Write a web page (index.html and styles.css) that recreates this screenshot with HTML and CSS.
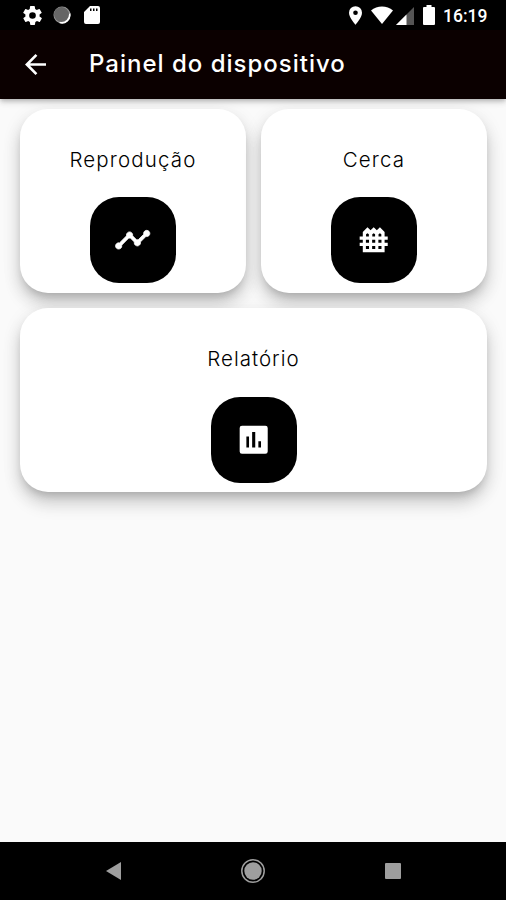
FILE: index.html
```html
<!DOCTYPE html>
<html lang="pt-BR">
<head>
<meta charset="utf-8">
<title>Painel do dispositivo</title>
<link rel="stylesheet" href="styles.css">
</head>
<body>
<div class="screen">
  <header class="top">
    <div class="status">
      <svg class="gear" viewBox="2 2 20 20"><path fill-rule="evenodd" d="M19.4 13a7.500 7.500 0 0 0 0-2l2.100-1.600a.5.5 0 0 0 .1-.6l-2-3.500a.5.5 0 0 0-.6-.2l-2.500 1a7.300 7.300 0 0 0-1.700-1l-.4-2.700a.5.500 0 0 0-.5-.4h-4a.5.5 0 0 0-.5.4L9.100 5.100a7.300 7.300 0 0 0-1.700 1l-2.500-1a.5.5 0 0 0-.6.2l-2 3.500a.5.5 0 0 0 .1.600L4.600 11a7.500 7.500 0 0 0 0 2l-2.100 1.600a.5.5 0 0 0-.1.600l2 3.500c.1.200.4.300.6.200l2.500-1a7.300 7.300 0 0 0 1.700 1l.4 2.700c0 .2.200.4.500.4h4c.2 0 .5-.2.500-.4l.4-2.700a7.300 7.300 0 0 0 1.700-1l2.500 1c.2.100.5 0 .6-.2l2-3.500a.5.5 0 0 0-.1-.6zM12 15.500a3.500 3.500 0 1 1 0-7 3.500 3.500 0 0 1 0 7z"/></svg>
      <svg class="disc" viewBox="0 0 18 18"><circle cx="9" cy="9" r="8.500" fill="#999"/><path d="M17.300 7A8.500 8.500 0 0 1 6 17z" fill="#fff"/><circle cx="8.500" cy="8.500" r="7.500" fill="#666"/></svg>
      <svg class="card-icon" viewBox="0 0 16 20"><path fill-rule="evenodd" d="M6 1h8a2 2 0 0 1 2 2v14a2 2 0 0 1-2 2H2a2 2 0 0 1-2-2V7zm0 2.500v2.500h1.500v-2.500zm3 0v2.500h1.500v-2.500zm3 0v2.500h1.500v-2.500z"/></svg>
      <span class="spacer"></span>
      <svg class="pin" viewBox="5 2 14 20"><path fill-rule="evenodd" d="M12 2a7 7 0 0 0-7 7c0 5.250 7 13 7 13s7-7.750 7-13a7 7 0 0 0-7-7zm0 9.500a2.500 2.500 0 1 1 0-5 2.500 2.500 0 0 1 0 5z"/></svg>
      <svg class="wifi" viewBox="0 0 22 18"><path d="M0 4.500C6-1 16-1 22 4.500L11 18z"/></svg>
      <svg class="signal" viewBox="0 0 18 18"><path d="M18 0v18H0z" fill="#555"/><path d="M10.500 7.500V18H0z"/></svg>
      <svg class="battery" viewBox="0 0 12 20"><path d="M3.500 0h5v2H11a1 1 0 0 1 1 1v16a1 1 0 0 1-1 1H1a1 1 0 0 1-1-1V3a1 1 0 0 1 1-1h2.500z"/></svg>
      <time class="clock">16:19</time>
    </div>
    <div class="appbar">
      <svg class="back" viewBox="4 4 16 16"><path d="M20 11H7.830l5.590-5.590L12 4l-8 8 8 8 1.410-1.410L7.830 13H20z"/></svg>
      <h1 class="title">Painel do dispositivo</h1>
    </div>
  </header>
  <main class="grid">
    <section class="card">
      <h2 class="label">Reprodução</h2>
      <div class="tile"><svg class="timeline" viewBox="0 0 24 24"><path d="M23 8c0 1.100-.9 2-2 2-.18 0-.35-.02-.51-.07l-3.560 3.550c.05.16.07.34.07.52 0 1.100-.9 2-2 2s-2-.9-2-2c0-.18.020-.36.070-.52l-2.550-2.550c-.16.050-.34.070-.52.070s-.36-.02-.52-.07l-4.550 4.560c.05.16.07.33.07.51 0 1.100-.9 2-2 2s-2-.9-2-2 .9-2 2-2c.18 0 .35.020.51.070l4.560-4.550C8.020 9.360 8 9.180 8 9c0-1.100.9-2 2-2s2 .9 2 2c0 .18-.02.36-.07.52l2.550 2.550c.16-.05.34-.07.52-.07s.36.020.52.070l3.550-3.560C19.020 8.350 19 8.180 19 8c0-1.100.9-2 2-2s2 .9 2 2z"/></svg></div>
    </section>
    <section class="card">
      <h2 class="label">Cerca</h2>
      <div class="tile"><svg viewBox="0 0 24 24"><path fill-rule="evenodd" d="M21 12v-2h-2V7l-3-3-2 2-2-2-2 2-2-2-3 3v3H3v2h2v2H3v2h2v4h14v-4h2v-2h-2v-2zM16 7.800l.9.700V10h-1.800V8.500zm-4 0l.9.700V10h-1.800V8.500zM11 14v-2h2v2zm2 2v2h-2v-2zM7.100 8.500l.9-.7.9.7V10H7.100zM7 12h2v2H7zm0 4h2v2H7zm10 2h-2v-2h2zm0-4h-2v-2h2z"/></svg></div>
    </section>
    <section class="card wide">
      <h2 class="label">Relatório</h2>
      <div class="tile"><svg viewBox="0 0 24 24"><path fill-rule="evenodd" d="M19.500 3h-15A1.500 1.500 0 0 0 3 4.500v15A1.500 1.500 0 0 0 4.500 21h15a1.500 1.500 0 0 0 1.500-1.500v-15A1.500 1.500 0 0 0 19.500 3zM9 17H7.300v-7H9zm4 0h-2V7h2zm3.700 0H15v-4h1.700z"/></svg></div>
    </section>
  </main>
  <nav class="nav">
    <svg class="nav-back" viewBox="0 0 15 18"><path d="M15 0v18L0 9z"/></svg>
    <svg class="nav-home" viewBox="0 0 24 24"><circle cx="12" cy="12" r="11.200" fill="none" stroke="#9e9e9e" stroke-width="1.500"/><circle cx="12" cy="12" r="8.700"/></svg>
    <svg class="nav-recent" viewBox="0 0 16 16"><rect width="16" height="16" rx="1"/></svg>
  </nav>
</div>
</body>
</html>
```

FILE: styles.css
```css
* { box-sizing: border-box; }
body { margin: 0; background: #fafafa; color: #000; font-family: Inter, sans-serif; }
svg { display: block; flex: none; fill: #fff; }
.screen { display: flex; flex-direction: column; height: 900px; overflow: hidden; }
.top {
  height: 99px;
  background: #0b0000;
  color: #fff;
  box-shadow: 0 2px 4px -1px rgba(0,0,0,.2), 0 4px 5px rgba(0,0,0,.1), 0 1px 10px rgba(0,0,0,.08);
}
.status { display: flex; align-items: center; height: 30px; padding: 0 18px 0 23px; background: #000; }
.gear { width: 19px; height: 19px; }
.disc { width: 18px; height: 18px; margin-left: 11px; }
.card-icon { width: 16px; height: 20px; margin-left: 13px; }
.spacer { flex: 1; }
.pin { width: 13px; height: 19px; }
.wifi { width: 22px; height: 18px; margin-left: 9px; }
.signal { width: 18px; height: 18px; margin: 2px 0 0 3px; }
.battery { width: 12px; height: 20px; margin-left: 9px; }
.clock { width: 45px; margin: 2px 0 0 8px; font: 500 17.500px/20px Roboto, sans-serif; white-space: nowrap; }
.appbar { display: flex; align-items: center; height: 68px; padding-left: 25px; }
.back { width: 21px; height: 21px; }
.title { margin: -1px 0 0 43px; font-size: 24px; font-weight: 500; line-height: 30px; letter-spacing: 1px; white-space: nowrap; }
.grid { flex: 1; display: grid; grid-template-columns: 226px 226px; grid-auto-rows: 184px; gap: 15px; align-content: start; padding: 10px 19px 0 20px; }
.card {
  display: flex;
  flex-direction: column;
  align-items: center;
  padding-top: 36px;
  border-radius: 28px;
  background: #fff;
  box-shadow: 0 6px 8px -3px rgba(0,0,0,.17), 0 12px 17px rgba(0,0,0,.14), 0 5px 20px rgba(0,0,0,.09);
}
.wide { grid-column: 1 / -1; }
.label { margin: 0 0 22px; font-size: 20.500px; font-weight: 300; line-height: 30px; letter-spacing: 1.150px; }
.wide .label { margin-bottom: 22.500px; letter-spacing: 1px; }
.tile { display: grid; place-items: center; width: 86px; height: 86px; border-radius: 29px; background: #000; }
.tile svg { width: 37.400px; height: 37.400px; }
.tile .timeline { stroke: #fff; stroke-width: .5; }
.nav { display: flex; align-items: center; justify-content: space-between; height: 58px; padding: 0 105px 0 106px; background: #000; }
.nav svg { fill: #9e9e9e; }
.nav-back { width: 15px; height: 18px; }
.nav-home { width: 24px; height: 24px; }
.nav-recent { width: 16px; height: 16px; }
```
